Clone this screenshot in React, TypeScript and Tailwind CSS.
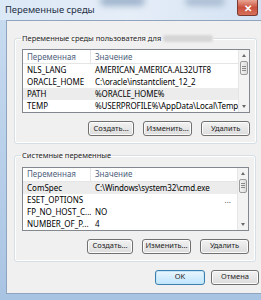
import React from "react";

type Row = { name: string; value: string; selected?: boolean; more?: boolean };

const userVars: Row[] = [
  { name: "NLS_LANG", value: "AMERICAN_AMERICA.AL32UTF8" },
  { name: "ORACLE_HOME", value: "C:\\oracle\\instantclient_12_2" },
  { name: "PATH", value: "%ORACLE_HOME%", selected: true },
  { name: "TEMP", value: "%USERPROFILE%\\AppData\\Local\\Temp" },
];

const systemVars: Row[] = [
  { name: "ComSpec", value: "C:\\Windows\\system32\\cmd.exe", selected: true },
  { name: "ESET_OPTIONS", value: "", more: true },
  { name: "FP_NO_HOST_C...", value: "NO" },
  { name: "NUMBER_OF_P...", value: "4" },
];

function Button({ label, primary }: { label: string; primary?: boolean }) {
  return (
    <button
      className={`w-full h-[15px] rounded-[3px] border text-[7.5px] leading-none text-[#1e1e1e] ${
        primary
          ? "border-[#3c7fb1] bg-gradient-to-b from-[#eaf6fd] to-[#bee6fd] shadow-[inset_0_0_0_1px_#c4e5f6]"
          : "border-[#707070] bg-gradient-to-b from-[#f2f2f2] to-[#dcdcdc] shadow-[inset_0_0_0_1px_#fbfbfb]"
      }`}
    >
      {label}
    </button>
  );
}

function Scrollbar() {
  return (
    <div className="w-[11px] flex flex-col bg-[#f3f3f3] border-l border-[#e6e6e6]">
      <div className="h-[11px] flex items-center justify-center">
        <div className="w-0 h-0 border-x-[2px] border-x-transparent border-b-[3px] border-b-[#6a6a6a]" />
      </div>
      <div className="h-[14px] mx-[1px] rounded-[2px] border border-[#9a9a9a] bg-gradient-to-r from-[#f3f3f3] to-[#dcdcdc] flex flex-col items-center justify-center gap-[1px]">
        <div className="w-[4px] h-px bg-[#8a8a8a]" />
        <div className="w-[4px] h-px bg-[#8a8a8a]" />
        <div className="w-[4px] h-px bg-[#8a8a8a]" />
      </div>
      <div className="flex-1" />
      <div className="h-[11px] flex items-center justify-center">
        <div className="w-0 h-0 border-x-[2px] border-x-transparent border-t-[3px] border-t-[#6a6a6a]" />
      </div>
    </div>
  );
}

function VarList({ rows }: { rows: Row[] }) {
  return (
    <div className="h-[64px] border border-[#828790] bg-white flex text-[8px]">
      <div className="flex-1 flex flex-col min-w-0">
        <div className="h-[14px] flex items-center text-[#4c607a] border-b border-[#e5e5e5]">
          <div className="w-[68px] pl-[4px] border-r border-[#e5e5e5] h-full flex items-center">Переменная</div>
          <div className="pl-[4px]">Значение</div>
        </div>
        {rows.map((r) => (
          <div
            key={r.name}
            className={`h-[12px] flex items-center text-black ${r.selected ? "bg-[#ececec]" : ""}`}
          >
            <div className="w-[68px] pl-[4px] whitespace-nowrap overflow-hidden">{r.name}</div>
            <div className="flex-1 pl-[4px] whitespace-nowrap overflow-hidden tracking-[-0.1px]">{r.value}</div>
            {r.more && <div className="pr-[6px] text-[#555]">...</div>}
          </div>
        ))}
      </div>
      <Scrollbar />
    </div>
  );
}

function Group({ title, rows, blur }: { title: string; rows: Row[]; blur?: boolean }) {
  return (
    <fieldset className="mr-[3px] border border-[#d5dfe5] rounded-[3px] pl-[7px] pr-[6px] pb-[7px] pt-[5px] shadow-[inset_0_0_0_1px_#ffffff]">
      <legend className="ml-[-1px] px-[1px] text-[7.5px] text-[#1e1e1e] flex items-center gap-[2px]">
        {title}
        {blur && <span className="inline-block w-[50px] h-[7px] rounded-[3px] bg-[#d6d6d6] blur-[1px]" />}
      </legend>
      <VarList rows={rows} />
      <div className="mt-[8px] flex justify-end gap-[9px]">
        <div className="w-[46px] flex"><Button label="Создать..." /></div>
        <div className="w-[49px] flex"><Button label="Изменить..." /></div>
        <div className="w-[49px] flex"><Button label="Удалить" /></div>
      </div>
    </fieldset>
  );
}

export default function App() {
  return (
    <div className="w-[261px] h-[300px] overflow-hidden bg-gradient-to-b from-[#c9dcf1] to-[#a9c4e3] flex flex-col font-['Segoe_UI','Noto_Sans',sans-serif] text-[7.5px]">
      <div className="h-[20px] flex items-start relative overflow-hidden bg-gradient-to-r from-[#dbe8f6] via-[#e6eef8] to-[#d3e2f3]">
        <div className="absolute left-[100px] top-[-4px] w-[45px] h-[10px] rounded-full bg-[#9fb4cc] blur-[3px]" />
        <div className="absolute left-[185px] top-[-3px] w-[40px] h-[9px] rounded-full bg-[#a9bcd2] blur-[3px]" />
        <div className="relative pl-[5px] pt-[5px] text-[9.4px] leading-none text-[#1e2f45]">Переменные среды</div>
        <div className="absolute right-[3px] top-0 w-[21px] h-[16px] rounded-b-[3px] border border-t-0 border-[#7a3a32] bg-gradient-to-b from-[#e8a493] via-[#c9503d] to-[#d7705b] flex items-center justify-center">
          <span className="text-white text-[10px] font-bold leading-none">✕</span>
        </div>
      </div>
      <div className="flex-1 ml-[6px] mb-[6px] bg-[#f0f0f0] border border-r-0 border-[#8ea4bf] flex flex-col pl-[7px] pr-[2px] pt-[12px]">
        <Group title="Переменные среды пользователя для" rows={userVars} blur />
        <div className="h-[6px]" />
        <Group title="Системные переменные" rows={systemVars} />
        <div className="mt-[8px] flex justify-end gap-[6px]">
          <div className="w-[50px] h-[15px] flex"><Button label="OK" primary /></div>
          <div className="w-[48px] h-[15px] flex"><Button label="Отмена" /></div>
        </div>
      </div>
    </div>
  );
}
